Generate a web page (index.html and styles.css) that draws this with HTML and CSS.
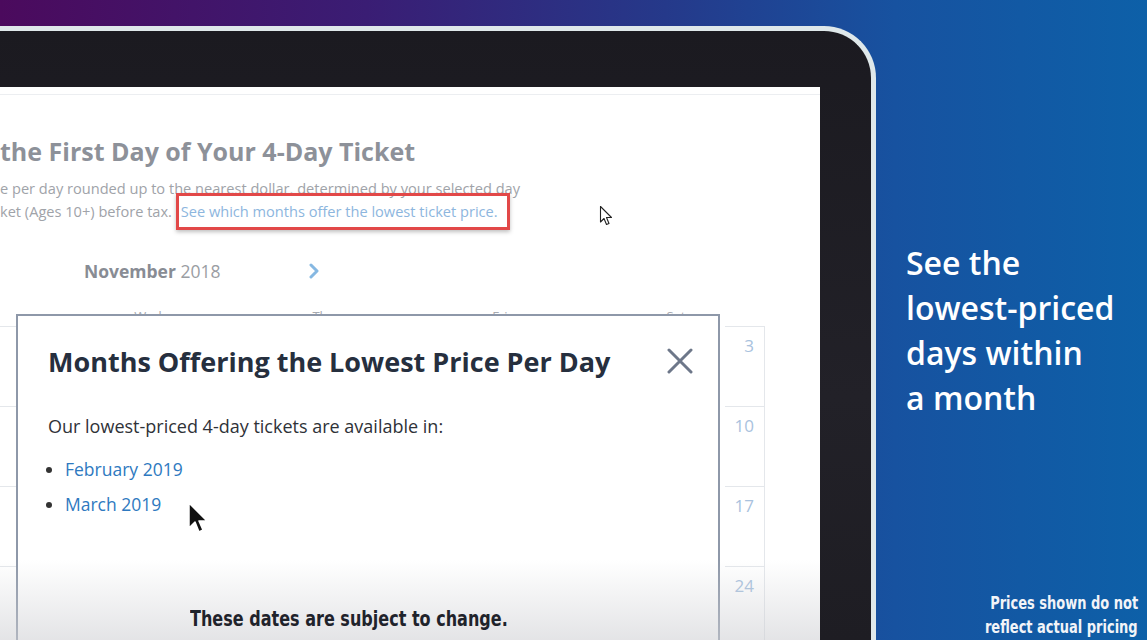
FILE: index.html
```html
<!DOCTYPE html>
<html lang="en">
<head>
  <meta charset="UTF-8">
  <meta name="viewport" content="width=device-width, initial-scale=1.0">
  <title>Lowest Price Months</title>
  <link rel="stylesheet" href="styles.css">
</head>
<body>
  <div class="stage">
    <!-- Laptop with the ticket page on screen -->
    <div class="laptop">
      <div class="screen">
        <div class="screen-bar"></div>
        <h1 class="page-title">the First Day of Your 4-Day Ticket</h1>
        <p class="page-intro">e per day rounded up to the nearest dollar, determined by your selected day<br>ket (Ages 10+) before tax. <span class="hilite">See which months offer the lowest ticket price.</span></p>

        <div class="month-nav">
          <span><b>November</b> 2018</span>
          <svg class="chevron" width="12" height="16" viewBox="0 0 12 16"><polyline points="3,2 9,8 3,14" fill="none" stroke="#86b8e2" stroke-width="3" stroke-linecap="round" stroke-linejoin="round"/></svg>
        </div>

        <div class="weekdays">
          <span>Wed</span><span>Thu</span><span>Fri</span><span>Sat</span>
        </div>

        <div class="calendar">
          <div class="week"><div class="day"></div><div class="day day-num">3</div></div>
          <div class="week"><div class="day"></div><div class="day day-num">10</div></div>
          <div class="week"><div class="day"></div><div class="day day-num">17</div></div>
          <div class="week"><div class="day"></div><div class="day day-num">24</div></div>
        </div>

        <!-- Modal -->
        <div class="modal">
          <div class="modal-head">
            <h2>Months Offering the Lowest Price Per Day</h2>
            <svg class="modal-close" width="26" height="26" viewBox="0 0 26 26"><path d="M2 2 L24 24 M24 2 L2 24" stroke="#6d7789" stroke-width="3" stroke-linecap="round"/></svg>
          </div>
          <p class="modal-text">Our lowest-priced 4-day tickets are available in:</p>
          <ul class="month-list">
            <li><a href="#">February 2019</a></li>
            <li><a href="#">March 2019</a></li>
          </ul>
        </div>

        <div class="vignette"></div>
        <div class="subtitle"><span>These dates are subject to change.</span></div>

        <svg class="cursor cursor-main" width="24" height="36" viewBox="0 0 24 36"><path d="M2 2 L2 27 L8 21 L12 31 L16 29 L12 20 L20 20 Z" fill="#111" stroke="#fff" stroke-width="1.5" stroke-linejoin="round"/></svg>
        <svg class="cursor cursor-ghost" width="16" height="24" viewBox="0 0 16 24"><path d="M1.5 1.5 L1.5 17 L5 13.5 L7.5 19.5 L10 18.5 L7.5 12.5 L12.5 12.5 Z" fill="#fff" stroke="#222" stroke-width="1.1" stroke-linejoin="round"/></svg>
      </div>
    </div>

    <!-- Caption -->
    <div class="caption">
      <h2 class="caption-title">See the<br>lowest-priced<br>days within<br>a month</h2>
      <p class="disclaimer"><span>Prices shown do not</span><br><span>reflect actual pricing</span></p>
    </div>
  </div>
</body>
</html>
```
FILE: styles.css
```css
* {
  box-sizing: border-box;
}

body {
  margin: 0;
  font-family: "Open Sans", Lato, sans-serif;
  background: linear-gradient(90deg, #4b0a5d 0%, #3a1d74 32%, #25398a 58%, #1752a0 78%, #0d60a8 100%);
}

.stage {
  display: flex;
  height: 640px;
  overflow: hidden;
}

.laptop {
  flex: none;
  width: 876px;
  margin-top: 26px;
  padding: 56px 51px 0 0;
  background: linear-gradient(180deg, #1b1a20, #222128 60%, #1e1d23);
  border-top: 5px solid #dfe8ea;
  border-right: 5px solid #dfe8ea;
  border-top-right-radius: 52px;
}

.screen {
  position: relative;
  height: 100%;
  background: #fff;
  overflow: hidden;
}

.screen-bar {
  height: 8px;
  border-bottom: 1px solid #eceef1;
}

.page-title {
  margin: 41px 0 0 0;
  font-size: 25px;
  line-height: 30px;
  font-weight: 700;
  color: #8d9199;
}

.page-intro {
  margin: 11px 0 0 0;
  font-size: 14.6px;
  line-height: 23px;
  color: #a0a3a9;
}

.hilite {
  color: #8db6de;
  padding: 5px 9px 6px 2px;
  border: 3px solid #e24848;
  box-shadow: 0 2px 4px rgba(0, 0, 0, 0.25);
}

.month-nav {
  display: flex;
  align-items: center;
  gap: 88px;
  margin-top: 36px;
  padding-left: 84px;
  font-size: 17.5px;
  line-height: 24px;
  color: #9a9da3;
}

.month-nav b {
  color: #888c94;
}

.weekdays {
  display: grid;
  grid-template-columns: repeat(4, 176px);
  margin-top: 25px;
  padding-left: 60px;
  font-size: 13px;
  line-height: 16px;
  color: #a7aab0;
  text-align: center;
}

.calendar {
  margin-top: 2px;
}

.week {
  display: grid;
  grid-template-columns: 720px 40px;
  column-gap: 5px;
  height: 80px;
}

.day {
  border-top: 1px solid #e4e7eb;
}

.day-num {
  border-right: 1px solid #e4e7eb;
  padding: 8px 10px 0 0;
  text-align: right;
  font-size: 17px;
  line-height: 22px;
  color: #a9c2de;
}

/* Modal */
.modal {
  position: absolute;
  left: 16px;
  top: 227px;
  width: 704px;
  height: 340px;
  padding: 29px 25px 0 30px;
  background: #fff;
  border: 2px solid #8e98a9;
  border-bottom: none;
}

.modal-head {
  display: flex;
  justify-content: space-between;
  align-items: center;
}

.modal-head h2 {
  margin: 0;
  font-size: 27px;
  line-height: 34px;
  font-weight: 700;
  color: #262f3e;
}

.modal-close {
  margin-top: -2px;
}

.modal-text {
  margin: 35px 0 0 0;
  font-size: 18px;
  line-height: 24px;
  color: #2f3238;
}

.month-list {
  margin: 19px 0 0 0;
  padding: 0 0 0 17px;
  font-size: 17.5px;
  line-height: 24px;
}

.month-list li {
  margin-bottom: 11px;
  color: #333;
}

.month-list a {
  color: #2e79c0;
  text-decoration: none;
}

.vignette {
  position: absolute;
  left: 0;
  right: 0;
  bottom: 0;
  height: 80px;
  background: linear-gradient(180deg, rgba(225, 225, 228, 0) 0%, rgba(205, 206, 210, 0.55) 100%);
}

.subtitle {
  position: absolute;
  left: 190px;
  top: 519px;
  font-family: "DejaVu Sans Condensed", "DejaVu Sans", sans-serif;
  font-stretch: condensed;
  font-weight: 700;
  font-size: 22px;
  line-height: 26px;
  color: #1f232b;
  white-space: nowrap;
}

.subtitle span {
  display: inline-block;
  transform: scaleX(0.81);
  transform-origin: left center;
}

.cursor {
  position: absolute;
}

.cursor-main {
  left: 187px;
  top: 414px;
}

.cursor-ghost {
  left: 599px;
  top: 118px;
}

/* Caption on the right */
.caption {
  flex: 1;
  display: flex;
  flex-direction: column;
  padding: 240px 9px 1px 30px;
  color: #fff;
}

.caption-title {
  margin: 0;
  font-size: 32px;
  line-height: 45px;
  font-weight: 600;
}

.disclaimer {
  margin: auto 0 0 0;
  text-align: right;
  font-family: "DejaVu Sans Condensed", "DejaVu Sans", sans-serif;
  font-stretch: condensed;
  font-weight: 700;
  font-size: 17px;
  line-height: 24px;
  color: #f2f4f8;
  white-space: nowrap;
}

.disclaimer span {
  display: inline-block;
  transform: scaleX(0.85);
  transform-origin: right center;
}
```
